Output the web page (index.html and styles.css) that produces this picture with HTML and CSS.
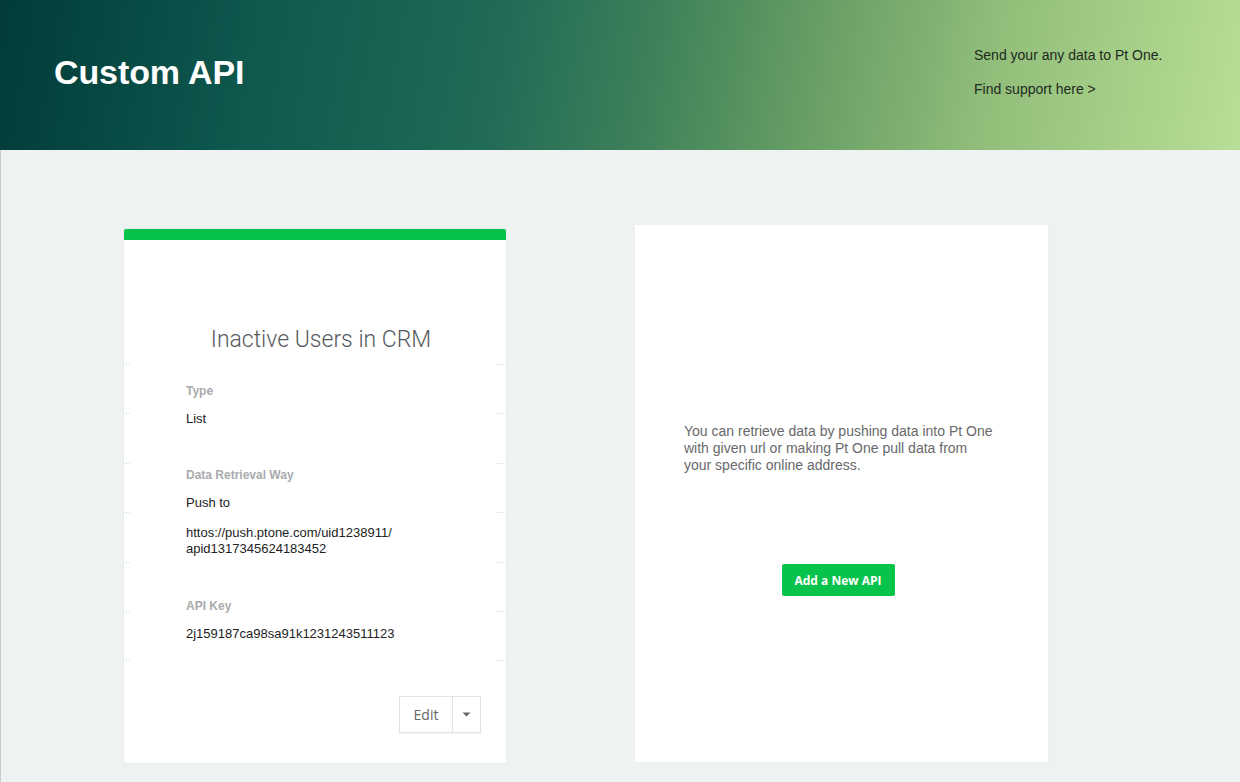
FILE: index.html
```html
<!DOCTYPE html>
<html>
<head>
<meta charset="utf-8">
<link rel="stylesheet" href="styles.css">
</head>
<body>
<header class="hero">
  <h1 class="hero-title">Custom API</h1>
  <div class="hero-links">
    <p>Send your any data to Pt One.</p>
    <p>Find support here &gt;</p>
  </div>
</header>
<main class="main">
  <section class="api-card">
    <div class="api-card-bar"></div>
    <div class="api-card-body">
      <h2 class="api-title">Inactive Users in CRM</h2>
      <div class="field">
        <div class="field-label">Type</div>
        <div class="field-value">List</div>
      </div>
      <div class="field field-gap">
        <div class="field-label">Data Retrieval Way</div>
        <div class="field-value">Push to</div>
        <div class="field-value field-url">httos://push.ptone.com/uid1238911/<br>apid1317345624183452</div>
      </div>
      <div class="field field-gap2">
        <div class="field-label">API Key</div>
        <div class="field-value">2j159187ca98sa91k1231243511123</div>
      </div>
      <div class="actions">
        <div class="split-btn">
          <span class="split-main">Edit</span>
          <span class="split-caret"><svg width="9" height="5" viewBox="0 0 9 5"><path d="M0.5 0.5h8L4.5 4.5z" fill="#666"/></svg></span>
        </div>
      </div>
    </div>
  </section>
  <section class="new-card">
    <p class="new-text">You can retrieve data by pushing data into Pt One with given url or making Pt One pull data from your specific online address.</p>
    <button class="btn-green">Add a New API</button>
  </section>
</main>
</body>
</html>
```
FILE: styles.css
```css
* { box-sizing: border-box; }
html, body { margin: 0; padding: 0; }
body {
  width: 1240px;
  height: 782px;
  overflow: hidden;
  background: #eef2f3;
  font-family: "Liberation Sans", Arial, sans-serif;
}
.hero {
  height: 150px;
  display: flex;
  justify-content: space-between;
  background: linear-gradient(100deg, #023b3a 0%, #0f5a4f 22%, #216a57 40%, #3d8059 52%, #6aa066 66%, #93bf7b 80%, #b9de95 100%);
}
.hero-title {
  margin: 0;
  padding: 52px 0 0 54px;
  color: #fff;
  font-size: 34px;
  font-weight: 700;
  line-height: 40px;
  letter-spacing: -0.1px;
}
.hero-links {
  width: 266px;
  padding-top: 47px;
}
.hero-links p {
  margin: 0 0 17px;
  font-size: 14px;
  line-height: 17px;
  color: #1e2a1e;
}
.main {
  height: 632px;
  border-left: 1px solid #c9cdce;
  display: flex;
  align-items: flex-start;
  padding: 75px 0 0 123px;
}
.api-card {
  width: 382px;
  height: 534px;
  margin-top: 4px;
  background: #fff;
  border-radius: 2px;
  box-shadow: 0 0 0 1px #e8ebec, 0 1px 2px rgba(0,0,0,0.04);
  display: flex;
  flex-direction: column;
}
.api-card-bar {
  height: 11px;
  background: #07c24b;
  border-radius: 2px 2px 0 0;
}
.api-card-body {
  flex: 1;
  padding: 0 0 0 62px;
  display: flex;
  flex-direction: column;
  background-image:
    repeating-linear-gradient(to bottom, #e9ecec 0 1px, transparent 1px 49.4px),
    repeating-linear-gradient(to bottom, #e9ecec 0 1px, transparent 1px 49.4px);
  background-size: 5px 300px, 8px 300px;
  background-position: 1px 124px, right 1px top 124px;
  background-repeat: no-repeat;
}
.api-title {
  margin: 87px 0 0 -50px;
  text-align: center;
  font-family: Roboto, "Liberation Sans", sans-serif;
  font-weight: 300;
  font-size: 23px;
  line-height: 26px;
  color: #555a5e;
}
.field { margin-top: 31px; }
.field-gap { margin-top: 41px; }
.field-gap2 { margin-top: 42px; }
.field-label {
  font-size: 12px;
  font-weight: 700;
  color: #a9abad;
  line-height: 14px;
}
.field-value {
  font-size: 13px;
  color: #222;
  line-height: 16px;
  margin-top: 13px;
}
.field-url { margin-top: 14px; }
.actions {
  margin-top: auto;
  padding: 0 25px 30px 0;
  display: flex;
  justify-content: flex-end;
}
.split-btn {
  display: flex;
  height: 37px;
  border: 1px solid #dfe3e4;
  box-shadow: 0 1px 1px rgba(0,0,0,0.04);
  font-family: "Open Sans", sans-serif;
  font-size: 14px;
  color: #666;
}
.split-main {
  width: 53px;
  display: flex;
  align-items: center;
  justify-content: center;
  border-right: 1px solid #dfe3e4;
}
.split-caret {
  width: 27px;
  display: flex;
  align-items: center;
  justify-content: center;
}
.new-card {
  width: 413px;
  height: 537px;
  margin-left: 129px;
  background: #fff;
  box-shadow: 0 0 0 1px #eef1f2;
  display: flex;
  flex-direction: column;
  align-items: center;
}
.new-text {
  width: 100%;
  margin: 198px 0 0;
  padding: 0 54px 0 49px;
  font-size: 14px;
  line-height: 17px;
  color: #67696b;
}
.btn-green {
  margin-top: 90px;
  margin-left: -7px;
  width: 113px;
  height: 32px;
  border: none;
  border-radius: 2px;
  background: #07c24b;
  color: #fff;
  font-family: "Open Sans", sans-serif;
  font-weight: 700;
  font-size: 12px;
  padding: 0;
}
```
